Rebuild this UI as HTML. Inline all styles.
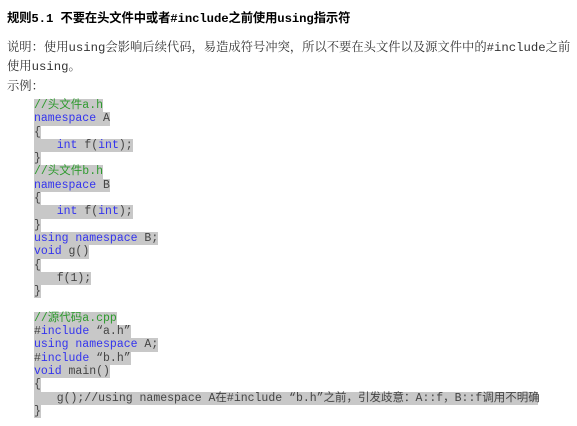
<!DOCTYPE html>
<html><head><meta charset="utf-8"><style>
body{margin:0;width:577px;height:426px;background:#fff;overflow:hidden;font-family:"Liberation Serif","Noto Serif CJK SC",serif;color:#333}
.t{position:absolute;left:7px;top:8px;font-size:12.3px;font-weight:bold;color:#000;white-space:nowrap;font-family:"Liberation Mono","Noto Sans CJK SC",monospace;letter-spacing:-0.1px}
.p{position:absolute;left:7px;font-size:12.3px;white-space:nowrap}
.m{font-family:"Liberation Mono",monospace}
.code{position:absolute;left:34px;top:99px;font-family:"Liberation Mono","Noto Sans CJK SC",monospace;font-size:11.5px;color:#444}
.code div{height:13.3px;line-height:13.3px;white-space:pre}
.code span.h{background:#c8c8c8;display:inline-block;height:13.3px}
.i{padding-left:2px}
.k{color:#3333ee}.c{color:#2e9a2e}
</style></head><body>
<div class="t">规则5.1 不要在头文件中或者#include之前使用using指示符</div>
<div class="p" style="top:37px">说明：使用<span class="m">using</span>会影响后续代码，易造成符号冲突，所以不要在头文件以及源文件中的<span class="m">#include</span>之前</div>
<div class="p" style="top:56px">使用<span class="m">using</span>。</div>
<div class="p" style="top:76px">示例：</div>
<div class="code">
<div><span class="h c">//头文件a.h</span></div>
<div><span class="h"><span class="k">namespace</span> A</span></div>
<div><span class="h">{</span></div>
<div><span class="h i">   <span class="k">int</span> f(<span class="k">int</span>);</span></div>
<div><span class="h">}</span></div>
<div><span class="h c">//头文件b.h</span></div>
<div><span class="h"><span class="k">namespace</span> B</span></div>
<div><span class="h">{</span></div>
<div><span class="h i">   <span class="k">int</span> f(<span class="k">int</span>);</span></div>
<div><span class="h">}</span></div>
<div><span class="h"><span class="k">using namespace</span> B;</span></div>
<div><span class="h"><span class="k">void</span> g()</span></div>
<div><span class="h">{</span></div>
<div><span class="h i">   f(1);</span></div>
<div><span class="h">}</span></div>
<div> </div>
<div><span class="h c">//源代码a.cpp</span></div>
<div><span class="h">#<span class="k">include</span> “a.h”</span></div>
<div><span class="h"><span class="k">using namespace</span> A;</span></div>
<div><span class="h">#<span class="k">include</span> “b.h”</span></div>
<div><span class="h"><span class="k">void</span> main()</span></div>
<div><span class="h">{</span></div>
<div><span class="h i" style="width:502px">   g();//using namespace A在#include “b.h”之前，引发歧意：A::f，B::f调用不明确</span></div>
<div><span class="h">}</span></div>
</div>
</body></html>
